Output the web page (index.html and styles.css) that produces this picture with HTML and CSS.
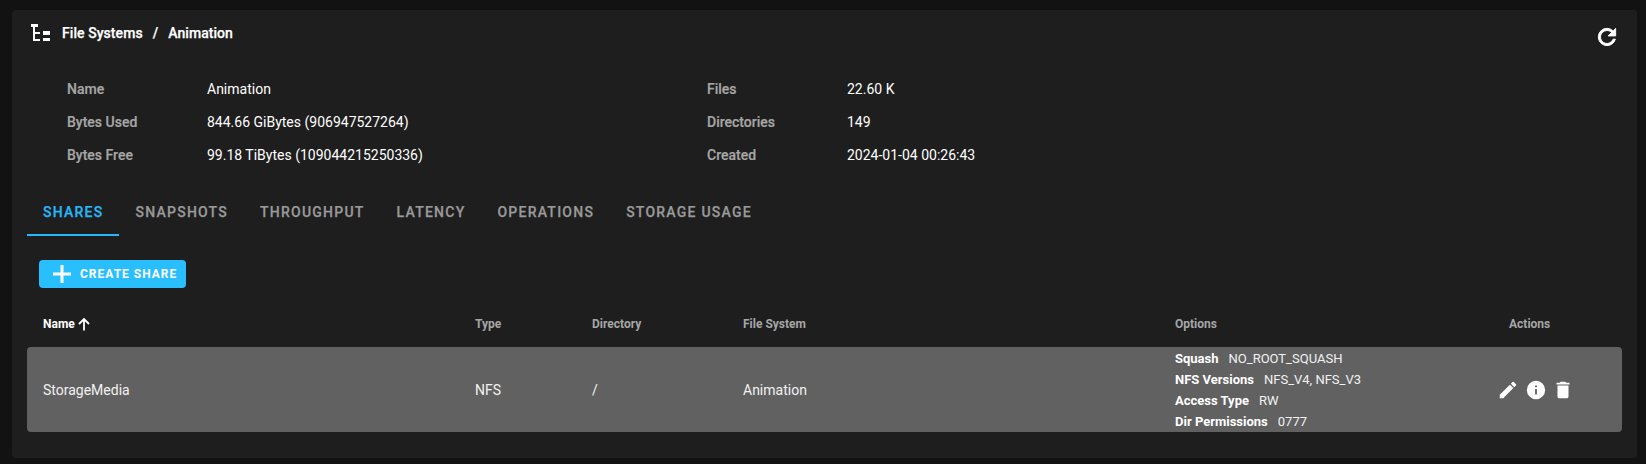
FILE: index.html
```html
<!DOCTYPE html>
<html lang="en">
<head>
<meta charset="utf-8">
<title>Animation</title>
<link rel="stylesheet" href="styles.css">
</head>
<body>
<main class="panel">
  <header class="head">
    <div class="crumbs">
      <svg class="tree" viewBox="0 0 19 17" width="19" height="17"><path fill="#fff" d="M0 0h7v3H0zM2 3h2v14H2zM4 8h5v2H4zM4 15h5v2H4zM12 7h7v4h-7zM12 14h7v3h-7z"/></svg>
      <span>File Systems</span><span class="sep">/</span><span>Animation</span>
    </div>
    <svg class="refresh" viewBox="0 0 24 24" width="26" height="26"><path fill="#fff" stroke="#fff" stroke-width="0.9" d="M17.65 6.35A7.96 7.96 0 0 0 12 4a8 8 0 1 0 7.73 10h-2.08A6 6 0 1 1 12 6c1.66 0 3.14.69 4.22 1.78L13 11h7V4l-2.35 2.35z"/></svg>
  </header>
  <section class="info">
    <div class="info-col">
      <div class="info-row"><span class="key">Name</span><span>Animation</span></div>
      <div class="info-row"><span class="key">Bytes Used</span><span>844.66 GiBytes (906947527264)</span></div>
      <div class="info-row"><span class="key">Bytes Free</span><span>99.18 TiBytes (109044215250336)</span></div>
    </div>
    <div class="info-col">
      <div class="info-row"><span class="key">Files</span><span>22.60 K</span></div>
      <div class="info-row"><span class="key">Directories</span><span>149</span></div>
      <div class="info-row"><span class="key">Created</span><span>2024-01-04 00:26:43</span></div>
    </div>
  </section>
  <nav class="tabs">
    <a class="tab active">SHARES</a><a class="tab">SNAPSHOTS</a><a class="tab">THROUGHPUT</a><a class="tab">LATENCY</a><a class="tab">OPERATIONS</a><a class="tab">STORAGE USAGE</a>
  </nav>
  <button class="create">
    <svg viewBox="0 0 18 18" width="18" height="18"><path fill="#fff" d="M7.5 0h3v7.5H18v3h-7.5V18h-3v-7.5H0v-3h7.5z"/></svg>
    <span>CREATE SHARE</span>
  </button>
  <div class="grid thead">
    <div class="sorted">Name<svg viewBox="0 0 14 14" width="14" height="14"><path fill="none" stroke="#fff" stroke-width="1.8" d="M7 13.5V2M2 7l5-5 5 5"/></svg></div>
    <div>Type</div><div>Directory</div><div>File System</div><div>Options</div><div class="act-head">Actions</div>
  </div>
  <div class="grid row">
    <div>StorageMedia</div><div>NFS</div><div>/</div><div>Animation</div>
    <div class="opts">
      <div><b>Squash</b>NO_ROOT_SQUASH</div>
      <div><b>NFS Versions</b>NFS_V4, NFS_V3</div>
      <div><b>Access Type</b>RW</div>
      <div><b>Dir Permissions</b>0777</div>
    </div>
    <div class="actions">
      <svg viewBox="0 0 24 24" width="22" height="22"><path fill="#fff" d="M3 17.25V21h3.75L17.81 9.94l-3.75-3.75L3 17.25zM20.71 7.04a1 1 0 0 0 0-1.41l-2.34-2.34a1 1 0 0 0-1.41 0l-1.83 1.83 3.75 3.75 1.83-1.83z"/></svg>
      <svg viewBox="0 0 24 24" width="22" height="22"><path fill="#fff" d="M12 2a10 10 0 1 0 0 20 10 10 0 0 0 0-20zm1 15h-2v-6h2v6zm0-8h-2V7h2v2z"/></svg>
      <svg viewBox="0 0 24 24" width="22" height="22"><path fill="#fff" d="M6 19c0 1.1.9 2 2 2h8a2 2 0 0 0 2-2V7H6v12zM19 4h-3.5l-1-1h-5l-1 1H5v2h14V4z"/></svg>
    </div>
  </div>
</main>
</body>
</html>
```
FILE: styles.css
```css
* { box-sizing: border-box; }
html, body { margin: 0; height: 100%; }
body {
  background: #121212;
  color: #fff;
  font-family: Roboto, "Liberation Sans", sans-serif;
  font-size: 14px;
  padding: 10px 9px 6px 12px;
  overflow: hidden;
}
.panel {
  background: #1e1e1e;
  border-radius: 4px;
  height: 448px;
  padding: 0 15px;
}
.head {
  height: 55px;
  display: flex;
  justify-content: space-between;
  padding-top: 13px;
}
.crumbs {
  display: flex;
  align-items: flex-start;
  font-weight: 500;
  font-size: 14px;
  line-height: 18px;
  letter-spacing: 0.06px;
  -webkit-text-stroke: 0.25px #fff;
  padding: 1px 0 0 4px;
  height: 24px;
}
.crumbs .tree { margin: 0 12px 0 0; }
.crumbs .sep { margin: 0 10px; }
.refresh { margin: 1px 2px 0 0; }
.info {
  display: grid;
  grid-template-columns: 640px 1fr;
  padding: 8px 0 0 40px;
  height: 124px;
}
.info-row {
  display: grid;
  grid-template-columns: 140px 1fr;
  height: 33px;
  line-height: 33px;
}
.key { color: #a6a6a6; font-weight: 500; -webkit-text-stroke: 0.2px #a6a6a6; }
.tabs { display: flex; height: 47px; }
.tab {
  padding: 0 16px;
  height: 47px;
  line-height: 46px;
  font-size: 14px;
  font-weight: 500;
  letter-spacing: 1.24px;
  color: #999;
  -webkit-text-stroke: 0.25px #999;
}
.tab.active { color: #29b6f6; border-bottom: 2px solid #29b6f6; -webkit-text-stroke-color: #29b6f6; }
.create {
  display: flex;
  align-items: center;
  gap: 9px;
  margin: 24px 0 0 12px;
  width: 147px;
  height: 28px;
  padding: 0 0 0 14px;
  border: 0;
  border-radius: 4px;
  background: #29bfff;
  color: #fff;
  font: 700 12px Roboto, sans-serif;
  letter-spacing: 1px;
}
.grid {
  display: grid;
  grid-template-columns: 432px 117px 151px 432px 338px 1fr;
  align-items: center;
}
.grid > div { padding-left: 16px; }
.thead {
  height: 59px;
  padding-top: 13px;
  font-size: 12px;
  font-weight: 700;
  color: #a6a6a6;
}
.sorted { color: #fff; display: flex; align-items: center; gap: 2px; }
.act-head { padding-left: 12px !important; }
.row {
  height: 85px;
  background: #616161;
  border-radius: 4px;
  font-size: 14px;
  color: #f2f2f2;
}
.opts { font-size: 13px; line-height: 21px; }
.opts b { font-weight: 700; color: #fff; margin-right: 10px; }
.actions { display: flex; gap: 5.5px; padding-left: 0 !important; }
```
